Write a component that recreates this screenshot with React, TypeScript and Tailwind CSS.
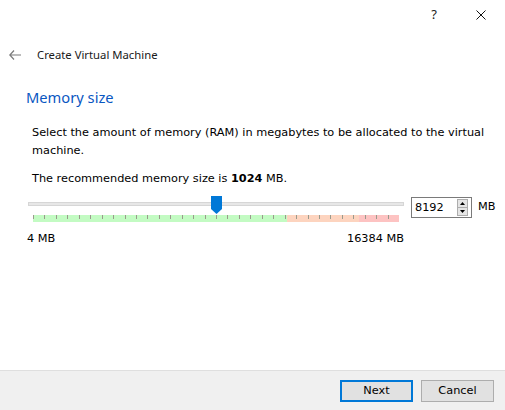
import React from "react";

const bodyFont = "font-['Tahoma','DejaVu_Sans',sans-serif]";
const uiFont = "font-['Segoe_UI','Noto_Sans','Open_Sans',sans-serif]";

function TickScale() {
  const w = 366;
  const ticks = Array.from({ length: 33 }, (_, i) => Math.round(i * (w / 32)) + 0.5);
  return (
    <svg width={w} height={7} className="block">
      <rect x={0} y={0} width={254} height={7} fill="#c3fbc3" />
      <rect x={254} y={0} width={72} height={7} fill="#fdd4bf" />
      <rect x={326} y={0} width={40} height={7} fill="#fdc3c2" />
      {ticks.map((x) => (
        <line key={x} x1={x} y1={0} x2={x} y2={4} stroke="#9a9a8c" strokeWidth={1} />
      ))}
    </svg>
  );
}

function MemorySlider() {
  return (
    <div className="relative w-[376px] h-[28px]">
      {/* groove */}
      <div className="absolute left-0 right-0 top-[6px] h-[4px] bg-[#e7e7e7] border border-[#d6d6d6]" />
      {/* handle */}
      <svg width={11} height={18} className="absolute left-[183px] top-0">
        <path d="M0 0 H11 V13 L5.5 18 L0 13 Z" fill="#0078d7" />
      </svg>
      <div className="absolute left-[5px] top-[19px]">
        <TickScale />
      </div>
    </div>
  );
}

function SpinBox() {
  return (
    <div className="flex items-center w-[61px] h-[21px] border border-[#7a7a7a] bg-white">
      <span className="flex-1 pl-[3px] text-[11.3px] text-black leading-none">8192</span>
      <div className="flex flex-col mr-[3px] w-[11px] h-[17px] border border-[#adadad] bg-[#e5e5e5]">
        <div className="flex-1 flex items-center justify-center border-b border-[#adadad]">
          <svg width={5} height={3}>
            <path d="M0 3 L2.5 0 L5 3 Z" fill="#000" />
          </svg>
        </div>
        <div className="flex-1 flex items-center justify-center">
          <svg width={5} height={3}>
            <path d="M0 0 L2.5 3 L5 0 Z" fill="#000" />
          </svg>
        </div>
      </div>
    </div>
  );
}

export default function App() {
  return (
    <div className={`w-[505px] h-[410px] bg-white flex flex-col ${bodyFont}`}>
      {/* Window controls */}
      <div className="h-[30px] flex justify-end items-center pr-[19px] gap-[39px]">
        <span className={`text-[13px] text-[#222] ${uiFont}`}>?</span>
        <svg width={10} height={10} viewBox="0 0 10 10">
          <path d="M0.5 0.5 L9.5 9.5 M9.5 0.5 L0.5 9.5" stroke="#111" strokeWidth={1} />
        </svg>
      </div>

      {/* Title */}
      <div className="flex items-center h-[30px] mt-[10px] pl-[9px]">
        <svg width={12} height={10} viewBox="0 0 12 10">
          <path d="M5 0.5 L0.8 5 L5 9.5 M0.8 5 H12" stroke="#7a7a7a" strokeWidth={1.2} fill="none" />
        </svg>
        <span className={`ml-[16px] text-[11.3px] text-[#1a1a1a] ${uiFont}`}>Create Virtual Machine</span>
      </div>

      {/* Page heading */}
      <div className={`pl-[26px] mt-[17px] text-[14.7px] text-[#0a57c2] leading-[20px] ${uiFont}`}>Memory size</div>

      {/* Body */}
      <div className="pl-[32px] pr-[12px] mt-[17px] text-[11.3px] text-black leading-[18px]">
        <p>Select the amount of memory (RAM) in megabytes to be allocated to the virtual machine.</p>
        <p className="mt-[10px]">
          The recommended memory size is <b>1024</b> MB.
        </p>
      </div>

      {/* Slider row */}
      <div className="flex items-start pl-[28px] mt-[3px]">
        <div className="flex flex-col">
          <div className="pt-[5px]">
            <MemorySlider />
          </div>
          <div className="flex justify-between text-[11.3px] text-black mt-[7px]">
            <span className="-ml-[1px]">4 MB</span>
            <span>16384 MB</span>
          </div>
        </div>
        <div className="ml-[7px] pt-[6px] flex items-center">
          <SpinBox />
          <span className="ml-[6px] text-[11.3px] text-black">MB</span>
        </div>
      </div>

      <div className="flex-1" />

      {/* Footer */}
      <div className="h-[40px] bg-[#f0f0f0] border-t border-[#dfdfdf] flex items-center justify-end pr-[11px] gap-[8px]">
        <button className="w-[73px] h-[22px] bg-[#e1e1e1] border-2 border-[#0078d7] text-[11.3px] text-black leading-none">
          Next
        </button>
        <button className="w-[73px] h-[22px] bg-[#e1e1e1] border border-[#adadad] text-[11.3px] text-black leading-none">
          Cancel
        </button>
      </div>
    </div>
  );
}
